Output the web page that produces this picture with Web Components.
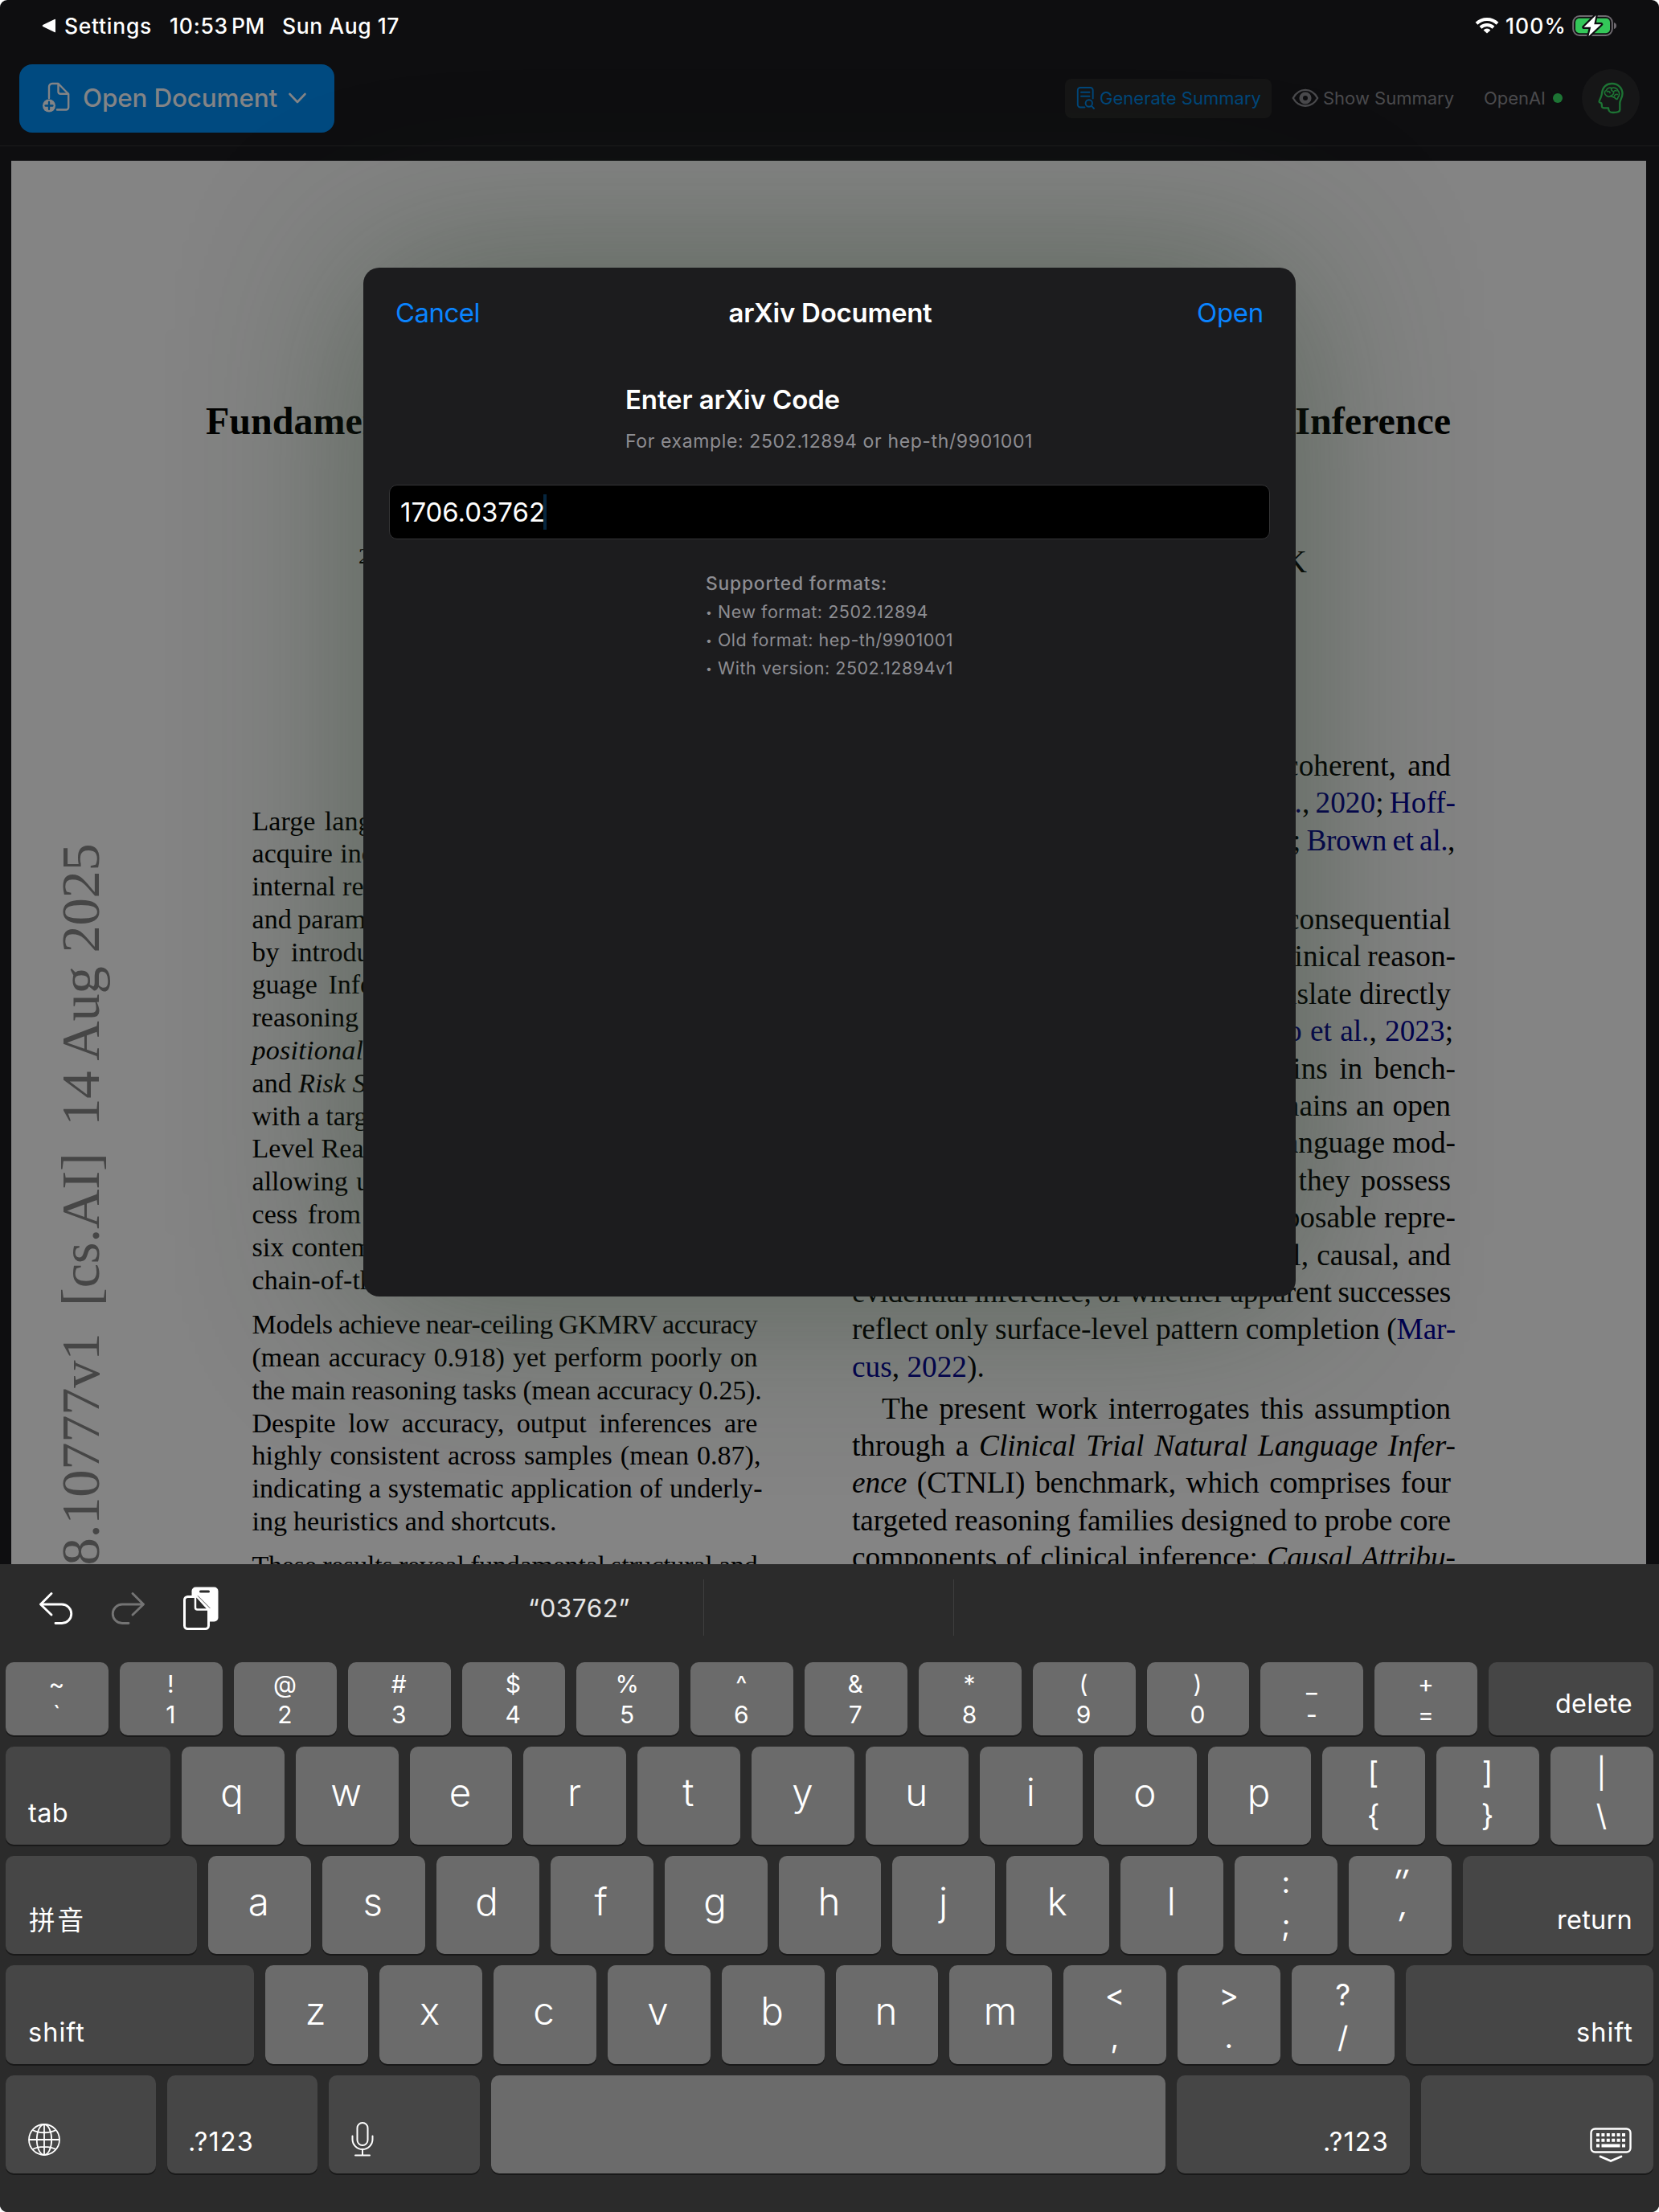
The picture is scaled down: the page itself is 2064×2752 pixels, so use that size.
<!DOCTYPE html>
<html lang="en">
<head>
<meta charset="utf-8">
<title>arXiv Document</title>
<style>
html,body{margin:0;padding:0;background:#fff}
body{width:2064px;height:2752px;overflow:hidden}
</style>
</head>
<body>
<reader-app></reader-app>
<script>
const define = (name, html, setup) => customElements.define(name, class extends HTMLElement {
  connectedCallback() {
    if (this.shadowRoot) return;
    const root = this.attachShadow({ mode: 'open' });
    const t = document.createElement('template');
    t.innerHTML = typeof html === 'function' ? html(this) : html;
    root.appendChild(t.content.cloneNode(true));
    if (setup) setup(this, root);
  }
});
const naturalWidth = el => {
  const r = document.createRange();
  r.selectNodeContents(el);
  return r.getBoundingClientRect().width;
};

/* ---------- status bar ---------- */
define('status-bar', `
<style>
:host{display:flex;align-items:center;height:62px;padding:2px 52px 0 52px;box-sizing:border-box;color:#fff;font:500 26.5px/60px Inter,"Liberation Sans",sans-serif}
svg{display:block;flex:none}
.grow{flex:1}
</style>
<svg width="18" height="20" viewBox="0 0 18 20"><path d="M17 2.6V17.4Q17 18.6 15.8 18.1L1.3 11Q0 10 1.3 9L15.8 1.9Q17 1.4 17 2.6Z" fill="#fff"/></svg>
<fit-text w="109" style="margin-left:10px">Settings</fit-text>
<fit-text w="73" style="margin-left:22px">10:53</fit-text>
<fit-text w="41" style="margin-left:4px">PM</fit-text>
<fit-text w="146" style="margin-left:22px">Sun Aug 17</fit-text>
<span class="grow"></span>
<svg width="30" height="22" viewBox="0 0 30 22"><g fill="none" stroke="#fff" stroke-width="4"><path d="M2 8.2A18.6 18.6 0 0 1 28 8.2"/><path d="M7 13.3A11.6 11.6 0 0 1 23 13.3"/></g><path d="M15 20.5L10.6 16.4A6.2 6.2 0 0 1 19.4 16.4Z" fill="#fff"/></svg>
<fit-text w="76" style="margin-left:8px">100%</fit-text>
<svg width="56" height="28" viewBox="0 0 56 28" style="margin-left:7px"><rect x="1.2" y="2" width="48.6" height="24" rx="8" fill="none" stroke="#6f6a70" stroke-width="2"/><path d="M52 10Q55 11 55 14T52 18Z" fill="#6f6a70"/><rect x="4" y="4.8" width="43" height="18.4" rx="5" fill="#34c759"/><path d="M29.5 1L14.5 15.8H23.2L20.5 27L36 12.2H27.3Z" fill="#fff" stroke="#0e0e10" stroke-width="4.5" paint-order="stroke" stroke-linejoin="round"/></svg>
`);

/* ---------- tool bar ---------- */
define('tool-bar', `
<style>
:host{display:flex;align-items:center;height:120px;box-sizing:border-box;padding:1px 24px 0;border-bottom:1px solid #1b1b1c;font:400 22px/48px Inter,"Liberation Sans",sans-serif;color:#4a4a4d}
svg{display:block;flex:none}
.open{display:flex;align-items:center;width:392px;height:85px;box-sizing:border-box;padding-left:28px;border-radius:16px;background:#004a80;color:#838486;font-weight:500;font-size:31.5px}
.grow{flex:1}
.gen{display:flex;align-items:center;width:257px;height:49px;box-sizing:border-box;padding-left:14px;border-radius:8px;background:#161616;color:#00477a}
.dot{width:12px;height:12px;border-radius:50%;background:#1d7434;margin-left:9px}
.round{display:flex;align-items:center;justify-content:center;width:72px;height:72px;border-radius:50%;background:#161617;margin-left:24px}
</style>
<div class="open">
<svg width="36" height="40" viewBox="0 0 36 40"><g fill="none" stroke="#838486" stroke-width="2.4" stroke-linejoin="round" stroke-linecap="round"><path d="M9 20V6a4 4 0 0 1 4-4H20.5L33.2 15V31.500a3 3 0 0 1-3 3H19"/><path d="M20.500 2.500V12.200a2.600 2.600 0 0 0 2.600 2.600H33"/></g><circle cx="9" cy="29.500" r="8" fill="#838486"/><path d="M9 25V34M4.500 29.500H13.500" stroke="#004a80" stroke-width="2.300" stroke-linecap="round"/></svg>
<fit-text w="242" style="margin-left:15px">Open Document</fit-text>
<svg width="24" height="16" viewBox="0 0 24 16" style="margin-left:13px"><path d="M2.500 3L12 13L21.500 3" fill="none" stroke="#838486" stroke-width="2.600" stroke-linecap="round" stroke-linejoin="round"/></svg>
</div>
<span class="grow"></span>
<div class="gen">
<svg width="24" height="30" viewBox="0 0 24 30"><g fill="none" stroke="#00477a" stroke-width="1.900" stroke-linecap="round"><path d="M10.500 26.500H5a3.200 3.200 0 0 1-3.200-3.200V5.200A3.200 3.200 0 0 1 5 2H17.500a3.200 3.200 0 0 1 3.200 3.200V15.500"/><path d="M6 7.800H16.500M6 12.800H16.500"/><circle cx="15.800" cy="21.500" r="4.200"/><path d="M19 24.800L22 28"/></g></svg>
<fit-text w="201" style="margin-left:5px">Generate Summary</fit-text>
</div>
<svg width="34" height="24" viewBox="0 0 34 24" style="margin-left:25px"><path d="M1.800 12C9-1.500 25-1.500 32.200 12C25 25 9 25 1.800 12Z" fill="none" stroke="#4a4a4d" stroke-width="2.300"/><circle cx="17" cy="12" r="5.300" fill="none" stroke="#4a4a4d" stroke-width="4.600"/></svg>
<fit-text w="163" style="margin-left:5px">Show Summary</fit-text>
<fit-text w="77" style="margin-left:37px">OpenAI</fit-text>
<span class="dot"></span>
<div class="round">
<svg width="34" height="40" viewBox="0 0 34 40"><g fill="none" stroke="#1d7434" stroke-width="2.300" stroke-linejoin="round" stroke-linecap="round"><path d="M6 13.500C7 6 12 2 18.500 2C26 2 31.500 7.500 31.500 14.500C31.500 20 28.500 22 28.300 26V34.500C28.300 36 27 38 20 38C15.500 38 14 36.500 14 32.300C10 32.500 7 32.800 6.200 31.200C5.500 29.500 6 28 5.600 26.800C5.400 25.800 2.800 26 2.500 24.500C2.300 23.300 6 18 6 13.500Z"/><g stroke-width="1.700"><path d="M11 16.500C8.500 15 9 11 11.500 10.500C12 7.500 16 6.500 18 7.800C21 6 25.500 8 26 11C28.500 13 28 17 26 19C25.500 21 25 22 23.500 21C21.500 18 18.500 18.800 17 17.500C15 18.500 12.500 18.500 11 16.500Z"/><path d="M12.500 12C14 11 16 11.800 16 13.500M18 8C17 9.500 18 11 19.500 11.500M16.500 17.500C19 16.500 21 15 20.500 13C20.500 11 22.500 10 24 11M21.500 17.500C22 15.500 24 15 25.500 15.500"/></g></g></svg>
</div>
`);

/* ---------- typeset line: over = overhang past the margin, ws / ls = word and letter spacing, start/end = ragged.
   A line with neither is stretched at its spaces, or squeezed between its letters, to fill the measure. ---------- */
define('tex-line', el => `
<style>
:host{display:block;white-space:nowrap;height:var(--lead);line-height:var(--lead);text-align:${el.hasAttribute('end') ? 'right' : 'left'};
word-spacing:${el.getAttribute('ws') || 0}px;letter-spacing:${el.getAttribute('ls') || 0}px;margin-right:-${el.getAttribute('over') || 0}px}
::slotted(a){color:#00004f}
</style><slot></slot>`, el => {
  if (el.hasAttribute('end') || el.hasAttribute('start')) return;
  const pad = parseFloat(getComputedStyle(el).paddingLeft) || 0;
  const text = el.textContent, spaces = text.split(' ').length - 1;
  let room = el.getBoundingClientRect().width - pad - naturalWidth(el);
  if (room < 0) {
    el.style.letterSpacing = (room * .75 / text.length).toFixed(3) + 'px';
    room *= .25;
  }
  el.style.wordSpacing = (room / spaces).toFixed(3) + 'px';
});

define('paper-page', `
<style>
:host{display:flex;height:1746px;margin:18px 16px 0 14px;overflow:hidden;background:#848484;color:#000;font-family:"Liberation Serif",serif}
.stamp{flex:none;width:242px;box-sizing:border-box;padding:850px 0 0 46px}
.stamp span{display:block;writing-mode:vertical-rl;transform:rotate(180deg);font-size:68.500px;line-height:80px;letter-spacing:-.25px;color:#464646;white-space:pre;text-align:right;height:1500px}
.main{flex:none;width:1549px}
.title{margin-top:294px;height:60px;font-size:48px;line-height:60px;font-weight:700;text-align:justify;text-align-last:justify;white-space:nowrap}
.affil{display:flex;justify-content:space-between;margin:120px 179px 0 190px;height:50px;line-height:50px;font-size:40px}
.affil sup{font-size:28px;line-height:36px;vertical-align:baseline}
.cols{display:flex;align-items:flex-start;justify-content:space-between;margin-top:206px;padding-left:57.500px}
.abs{width:629px;margin-top:71.500px;font-size:34.1px;--lead:40.8px}
.body{width:745px;font-size:37.3px;--lead:46.4px}
.gap1{height:14.7px}.gap2{height:5.500px}.blank{height:46.400px}
</style>
<div class="stamp"><span>arXiv:2508.10777v1&nbsp; [cs.AI]&nbsp; 14 Aug 2025</span></div>
<div class="main">
<div class="title">Fundamental Limitations of LLMs in Clinical Natural Language Inference</div>
<div class="affil"><sup>2</sup><span>UK</span></div>
<div class="cols">
<div class="abs">
<tex-line start ws="3">Large language</tex-line>
<tex-line start ws="1">acquire increasingly</tex-line>
<tex-line start>internal representations</tex-line>
<tex-line start ws="-1">and parameters</tex-line>
<tex-line start ws="6">by introducing</tex-line>
<tex-line start ws="5">guage Inference</tex-line>
<tex-line start>reasoning</tex-line>
<tex-line start ls=".25"><i>positional</i></tex-line>
<tex-line start>and <i>Risk State</i></tex-line>
<tex-line start ws="-.5">with a targeted</tex-line>
<tex-line start>Level Reasoning</tex-line>
<tex-line start ws="2">allowing us</tex-line>
<tex-line start ws="4">cess from</tex-line>
<tex-line start ws="1">six contemporary</tex-line>
<tex-line start>chain-of-thought</tex-line>
<div class="gap1"></div>
<tex-line>Models achieve near-ceiling GKMRV accuracy</tex-line>
<tex-line>(mean accuracy 0.918) yet perform poorly on</tex-line>
<tex-line over="5">the main reasoning tasks (mean accuracy 0.25).</tex-line>
<tex-line>Despite low accuracy, output inferences are</tex-line>
<tex-line over="4">highly consistent across samples (mean 0.87),</tex-line>
<tex-line over="6">indicating a systematic application of underly-</tex-line>
<tex-line start ws="-.5">ing heuristics and shortcuts.</tex-line>
<div class="gap1"></div>
<tex-line>These results reveal fundamental structural and</tex-line>
</div>
<div class="body">
<tex-line end ws="5">coherent, and</tex-line>
<tex-line end over="6" ws="-2"><a>et al.</a>, <a>2020</a>; <a>Hoff-</a></tex-line>
<tex-line end over="5" ws="-1.5" ls="-.4">2022; <a>Brown et al.</a>,</tex-line>
<div class="blank"></div><div class="gap2"></div>
<tex-line end>consequential</tex-line>
<tex-line end over="6" ws="-1.500">clinical reason-</tex-line>
<tex-line end>translate directly</tex-line>
<tex-line end over="3" ws="1"><a>Bao et al.</a>, <a>2023</a>;</tex-line>
<tex-line end over="6" ws="5">gains in bench-</tex-line>
<tex-line end ws="1">remains an open</tex-line>
<tex-line end over="6">language mod-</tex-line>
<tex-line end ws="4">they possess</tex-line>
<tex-line end over="6">composable repre-</tex-line>
<tex-line end ws="1">structural, causal, and</tex-line>
<tex-line>evidential inference, or whether apparent successes</tex-line>
<tex-line over="6">reflect only surface-level pattern completion (<a>Mar-</a></tex-line>
<tex-line start><a>cus</a>, <a>2022</a>).</tex-line>
<div class="gap2"></div>
<tex-line style="padding-left:37px">The present work interrogates this assumption</tex-line>
<tex-line over="6">through a <i>Clinical Trial Natural Language Infer-</i></tex-line>
<tex-line><i>ence</i> (CTNLI) benchmark, which comprises four</tex-line>
<tex-line>targeted reasoning families designed to probe core</tex-line>
<tex-line over="6">components of clinical inference: <i>Causal Attribu-</i></tex-line>
</div>
</div>
</div>
`);

/* ---------- sheet ---------- */
define('arxiv-sheet', `
<style>
:host{position:absolute;left:452px;top:333px;width:1160px;height:1280px;box-sizing:border-box;padding:0 32px;border-radius:20px;background:#1c1c1e;box-shadow:0 0 225px rgba(36,62,36,.46);color:#fff;font:400 33px/40px Inter,"Liberation Sans",sans-serif;display:flex;flex-direction:column;align-items:center}
header{display:flex;justify-content:space-between;align-self:stretch;padding:36px 8px 0 8px;color:#0a84ff}
header .t{color:#fff;font-weight:600;margin-right:20px}
.intro{width:508px;margin-top:68px;display:flex;flex-direction:column}
.h{font-weight:600}
.eg{font-size:23px;line-height:30px;color:#8d8d92;margin-top:17px}
.field{align-self:stretch;box-sizing:border-box;height:68px;margin-top:39px;border:1.500px solid #343436;border-radius:10px;background:#000;display:flex;align-items:center;padding-left:13px}
.caret{width:4px;height:44px;margin-left:-2px;background:#06263f}
.fmt{width:308px;margin-top:37px;color:#8d8d92;font-size:21.500px;line-height:35px;display:flex;flex-direction:column;align-items:flex-start}
.fmt b{font-size:22.800px;font-weight:500;line-height:36px}
i{font-style:normal;font-size:14px;vertical-align:2px}
</style>
<header><fit-text w="105">Cancel</fit-text><fit-text class="t" w="253">arXiv Document</fit-text><fit-text w="83">Open</fit-text></header>
<div class="intro"><fit-text class="h" w="267">Enter arXiv Code</fit-text><fit-text class="eg" w="507">For example: 2502.12894 or hep-th/9901001</fit-text></div>
<div class="field"><fit-text w="180">1706.03762</fit-text><span class="caret"></span></div>
<div class="fmt"><b><fit-text w="226">Supported formats:</fit-text></b>
<fit-text w="277"><i>•</i> New format: 2502.12894</fit-text>
<fit-text w="308"><i>•</i> Old format: hep-th/9901001</fit-text>
<fit-text w="308"><i>•</i> With version: 2502.12894v1</fit-text></div>
`);

/* ---------- keyboard ---------- */
define('kb-key', el => {
  const a = n => el.getAttribute(n), esc = s => s.replace(/&/g, '&amp;').replace(/</g, '&lt;');
  let inner = '<slot></slot>';
  if (a('pair')) inner = [...a('pair')].map(c => `<span class="p${'″′'.includes(c) ? ' q' : ''}">${esc(c)}</span>`).join('');
  else if (a('ch')) inner = `<span class="c">${a('ch')}</span>`;
  else if (a('label')) inner = `<fit-text class="l" w="${a('fw')}">${a('label')}</fit-text>`;
  return `
<style>
:host{display:flex;flex-direction:column;flex:none;box-sizing:border-box;width:${a('w') || 127.96}px;height:100%;border-radius:10px;background:#6b6b6b;box-shadow:0 2px 0 #191919;color:#fff;font-family:Inter,"Liberation Sans","Noto Sans CJK SC",sans-serif;align-items:center}
:host([dark]){background:#464646;justify-content:flex-end;align-items:flex-start;padding:0 26px 19px 28px}
:host([right]){align-items:flex-end}
:host([wide]){flex:1;width:auto}
.c{font-size:47.500px;line-height:114px;font-weight:330;margin-left:-2px}
.p{font-size:var(--pf,37px);line-height:var(--pl,53px);font-weight:400;margin-left:-1px}
.q{transform:skewX(-12deg) scale(1.1,1.15)}
.p:first-of-type{margin-top:var(--pt,6px)}
.l{font-size:32.500px;line-height:40px}
</style>${inner}`;
});

const keys = s => s.split('').map(c => `<kb-key ch="${c}"></kb-key>`).join('');
const pairs = l => l.map(p => `<kb-key pair="${p.replace(/&/g, '&amp;').replace(/</g, '&lt;')}"></kb-key>`).join('');

define('key-board', `
<style>
:host{display:flex;flex-direction:column;height:806px;box-sizing:border-box;padding:0 7px;background:#2b2b2b;gap:14px}
.tools{display:flex;align-items:center;height:108px;color:#e6e6e6;font:400 31.500px/60px Inter,"Liberation Sans",sans-serif;padding:0 0 0 40px}
.tools svg,.i{display:block;flex:none}
.v{width:1px;height:70px;background:#3f3f3f}
.row{display:flex;gap:14px;height:122px}
.n{height:91px;--pf:30px;--pl:38px;--pt:8px}
</style>
<div class="tools">
<svg width="44" height="44" viewBox="0 0 44 44" fill="none" stroke="#fff" stroke-width="2.900" stroke-linecap="round" stroke-linejoin="round" style="margin-top:2px"><path d="M17 3.500L3.500 17L17 30M3.500 17H30A11.500 11.500 0 0 1 30 40.500H22"/></svg>
<svg width="44" height="44" viewBox="0 0 44 44" fill="none" stroke="#747474" stroke-width="2.900" stroke-linecap="round" stroke-linejoin="round" style="margin:2px 0 0 47px"><path d="M27 3.500L40.500 17L27 30M40.500 17H14A11.500 11.500 0 0 0 14 40.500H22"/></svg>
<svg width="46" height="56" viewBox="0 0 46 56" style="margin:2px 0 0 45px"><rect x="11.500" y="1.500" width="33" height="43" rx="5" fill="#fff"/><rect x="21" y="5.500" width="13" height="3" rx="1.500" fill="#2b2b2b"/><path d="M2.500 17.500a4 4 0 0 1 4-4H18L32.500 28V49.500a4 4 0 0 1-4 4H6.500a4 4 0 0 1-4-4Z" fill="#2b2b2b" stroke="#fff" stroke-width="3"/><path d="M16 13.500V27a2.500 2.500 0 0 0 2.500 2.500H32.500L18 13.500Z" fill="#2b2b2b" stroke="#fff" stroke-width="2.500" stroke-linejoin="round"/><path d="M19 12.300L34.300 27.800" stroke="#2b2b2b" stroke-width=".8"/></svg>
<fit-text w="127" style="margin:1px 0 0 384px">“03762”</fit-text><span class="v" style="margin-left:91px"></span><span class="v" style="margin-left:310px"></span>
</div>
<div class="row n">${pairs(['~`','!1','@2','#3','$4','%5','^6','&7','*8','(9',')0','_-','+='])}<kb-key dark right wide label="delete" fw="96"></kb-key></div>
<div class="row"><kb-key dark wide label="tab" fw="50"></kb-key>${keys('qwertyuiop')}${pairs(['[{',']}','|\\'])}</div>
<div class="row"><kb-key dark wide label="拼音" fw="71" style="padding-bottom:21px;padding-left:29px"></kb-key>${keys('asdfghjkl')}${pairs([':;','″′'])}<kb-key dark right wide label="return" fw="94" style="padding-bottom:22px"></kb-key></div>
<div class="row" style="height:123px;--pt:10px"><kb-key dark wide label="shift" fw="71"></kb-key>${keys('zxcvbnm')}${pairs(['<,','>.','?/'])}<kb-key dark right wide label="shift" fw="71" style="padding-right:25px"></kb-key></div>
<div class="row">
<kb-key dark w="187"><svg class="i" width="42" height="42" viewBox="0 0 42 42" fill="none" stroke="#fff" stroke-width="1.800" style="margin:0 0 2px -1px"><circle cx="21" cy="21" r="19"/><ellipse cx="21" cy="21" rx="9.200" ry="19"/><path d="M21 2V40M2 21H40M6.500 9C14 13.300 28 13.300 35.500 9M6.500 33C14 28.700 28 28.700 35.500 33"/></svg></kb-key>
<kb-key dark w="187" label=".?123" fw="82" style="padding-left:26px"></kb-key>
<kb-key dark w="188"><svg class="i" width="32" height="46" viewBox="0 0 32 46" fill="none" stroke="#fff" stroke-width="2" stroke-linecap="round" style="margin-left:-2px"><rect x="9.500" y="2" width="13" height="28" rx="6.500"/><path d="M3.500 18.500V22.500A12.500 12.500 0 0 0 28.500 22.500V18.500M16 35V42.500M7 42.500H25"/></svg></kb-key>
<kb-key w="839"></kb-key>
<kb-key dark right w="290" label=".?123" fw="82"></kb-key>
<kb-key dark right wide style="padding-bottom:12px"><svg class="i" width="54" height="46" viewBox="0 0 54 46" fill="none" stroke="#fff" stroke-width="2.400"><rect x="2.500" y="2.500" width="49" height="29" rx="5"/><path d="M9 10H45M9 16.800H45" stroke-width="4" stroke-dasharray="4 2.400"/><path d="M9 23.500H13M15.500 23.500H38.500M41 23.500H45" stroke-width="4"/><path d="M14 37L27 42.500L40 37" stroke-width="2.800" stroke-linecap="round" stroke-linejoin="round"/></svg></kb-key>
</div>
`);

define('reader-app', `
<style>
:host{display:flex;flex-direction:column;position:relative;width:2064px;height:2752px;overflow:hidden;border-radius:9px;background:#0e0e10}
key-board{position:relative;flex:none}
</style>
<status-bar></status-bar>
<tool-bar></tool-bar>
<paper-page></paper-page>
<arxiv-sheet></arxiv-sheet>
<key-board></key-board>
`);

/* Tracks its text so that it fills exactly w pixels. */
define('fit-text', `<style>:host{display:inline-block;white-space:pre;flex:none}</style><slot></slot>`, el => {
  const n = [...el.textContent].length, w = +el.getAttribute('w');
  el.style.letterSpacing = ((w - naturalWidth(el)) / n).toFixed(3) + 'px';
  el.style.width = w + 'px';
});
</script>
</body>
</html>
